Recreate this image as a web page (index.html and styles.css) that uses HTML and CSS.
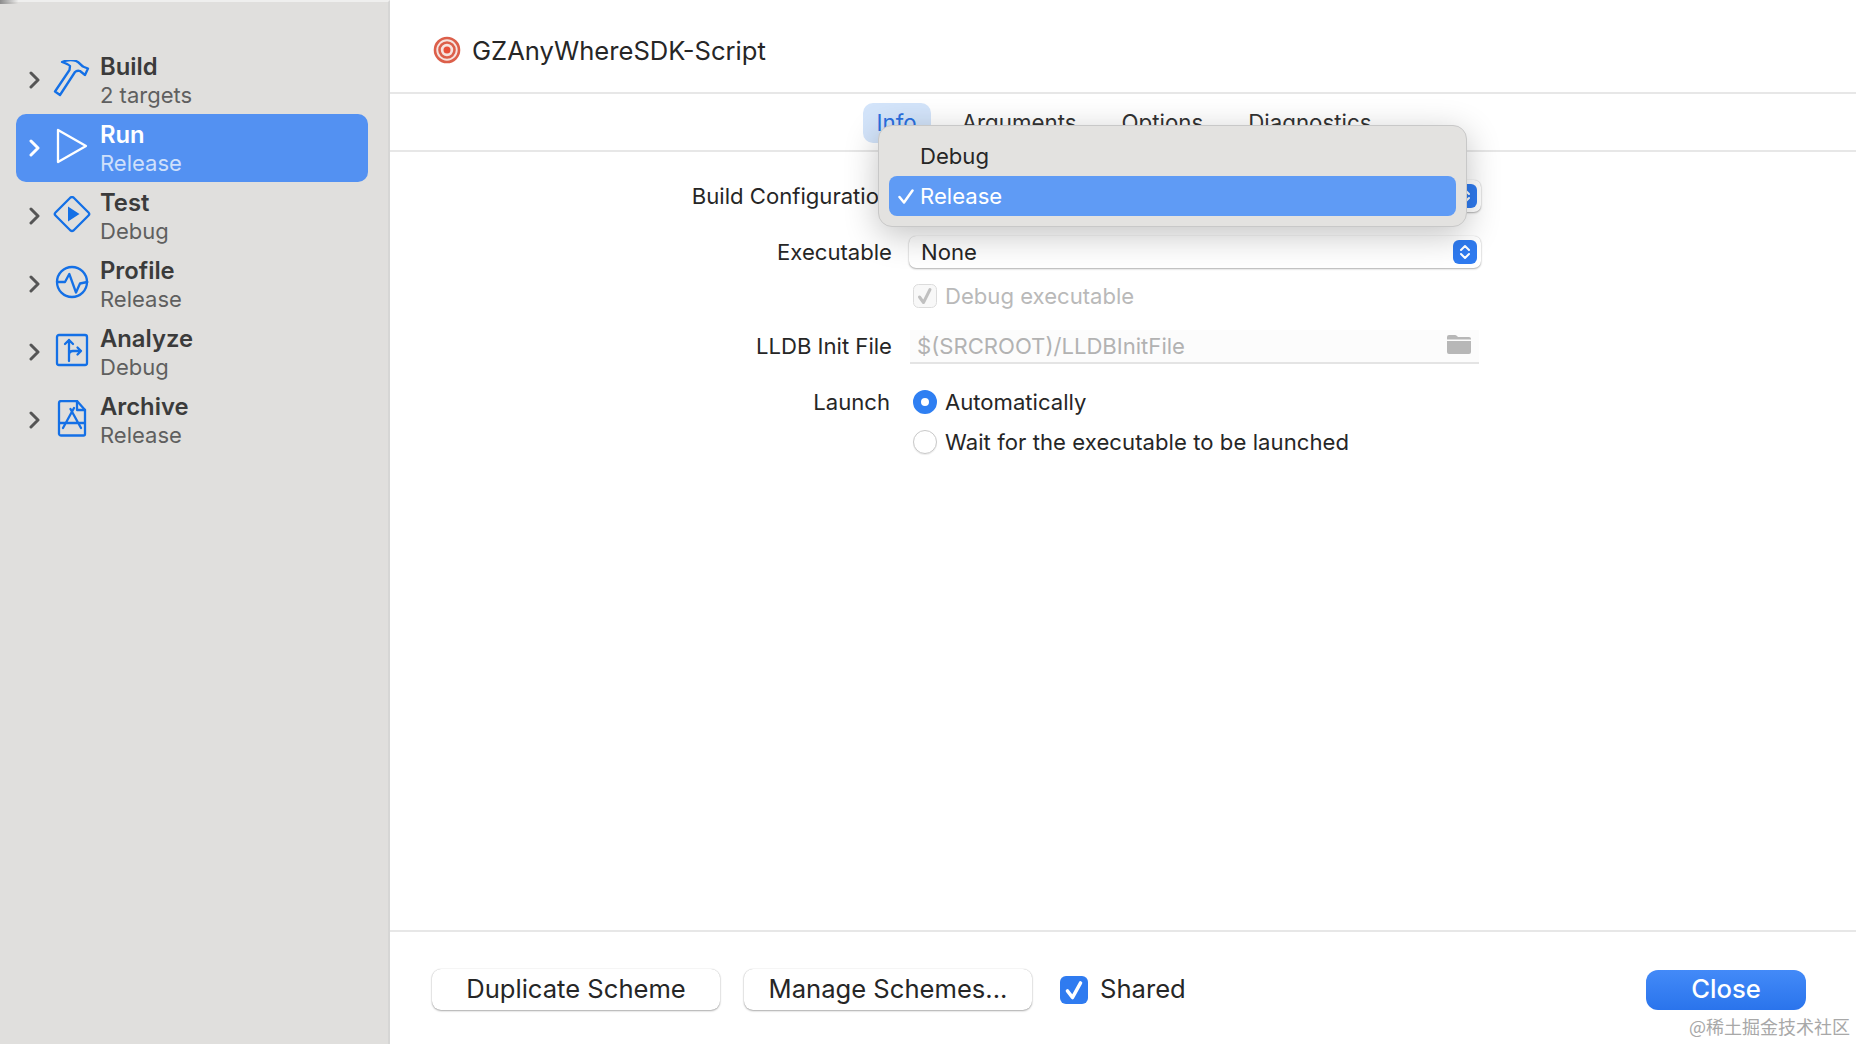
FILE: index.html
```html
<!DOCTYPE html>
<html lang="en">
<head>
<meta charset="utf-8">
<title>GZAnyWhereSDK-Script</title>
<link rel="stylesheet" href="styles.css">
</head>
<body>
<div class="window">
  <aside class="sidebar">
    <div class="action">
      <svg class="chev" viewBox="0 0 12 18"><path d="M2 2l7 7-7 7"/></svg>
      <svg class="icon" viewBox="0 0 40 40"><path d="M10 2C15 0 20-.3 24 1c4 1.500 5 5 8 6l4 1.500L33 15l-5-4c-2-.5-4 0-5 1L8 35l-5-3.500L17.500 10l.5-4c-2-2-5-3-8-4z"/></svg>
      <div class="labels"><span class="name">Build</span><span class="sub">2 targets</span></div>
    </div>
    <div class="action selected">
      <svg class="chev" viewBox="0 0 12 18"><path d="M2 2l7 7-7 7"/></svg>
      <svg class="icon" viewBox="0 0 40 40"><path d="M6 2l28 16L6 34z"/></svg>
      <div class="labels"><span class="name">Run</span><span class="sub">Release</span></div>
    </div>
    <div class="action">
      <svg class="chev" viewBox="0 0 12 18"><path d="M2 2l7 7-7 7"/></svg>
      <svg class="icon" viewBox="0 0 40 40"><path d="M18.500 1.500q1.500-1 3 0L36.500 16.500q1.500 1.500 0 3L21.500 34.500q-1.500 1-3 0L3.500 19.500q-1.500-1.500 0-3z"/><path class="fill" d="M16 10.500l11.500 7.500-11.500 7.500z"/></svg>
      <div class="labels"><span class="name">Test</span><span class="sub">Debug</span></div>
    </div>
    <div class="action">
      <svg class="chev" viewBox="0 0 12 18"><path d="M2 2l7 7-7 7"/></svg>
      <svg class="icon" viewBox="0 0 40 40"><circle cx="20" cy="18" r="15"/><path d="M5 18h8l4.300-8L24 28.500l4-9 7.300-1.500"/></svg>
      <div class="labels"><span class="name">Profile</span><span class="sub">Release</span></div>
    </div>
    <div class="action">
      <svg class="chev" viewBox="0 0 12 18"><path d="M2 2l7 7-7 7"/></svg>
      <svg class="icon" viewBox="0 0 40 40"><rect x="5" y="3" width="30" height="30" rx="2"/><path d="M17 29V8m-4 4l4-4 4 4M17 23c0-3 2-4 4-4h8m-3.500-3.500L29 19l-3.500 3.500"/></svg>
      <div class="labels"><span class="name">Analyze</span><span class="sub">Debug</span></div>
    </div>
    <div class="action">
      <svg class="chev" viewBox="0 0 12 18"><path d="M2 2l7 7-7 7"/></svg>
      <svg class="icon" viewBox="0 0 40 40"><path d="M9 1h16l8 9v24a1.500 1.500 0 0 1-1.500 1.500H9A2 2 0 0 1 7 34V3a2 2 0 0 1 2-2z"/><path d="M25 1v9h8M22 8L11 28M18.500 9L29 28M8 23h24" /></svg>
      <div class="labels"><span class="name">Archive</span><span class="sub">Release</span></div>
    </div>
  </aside>

  <main class="main">
    <header class="header">
      <svg class="target" viewBox="0 0 28 28"><circle class="t-bg" cx="14" cy="14" r="12"/><circle class="t-ring" cx="14" cy="14" r="12"/><circle class="t-ring" cx="14" cy="14" r="7.500"/><circle class="t-dot" cx="14" cy="14" r="3.500"/></svg>
      <span class="title">GZAnyWhereSDK-Script</span>
    </header>
    <nav class="tabs">
      <span class="tab active">Info</span>
      <span class="tab">Arguments</span>
      <span class="tab">Options</span>
      <span class="tab">Diagnostics</span>
    </nav>
    <section class="form">
      <div class="row first">
        <label class="label">Build Configuration</label>
        <div class="select"><span>Release</span>
          <svg class="stepper" viewBox="0 0 24 24"><rect width="24" height="24" rx="6"/><path d="M8 10l4-4 4 4M8 14l4 4 4-4"/></svg>
        </div>
      </div>
      <div class="row exec">
        <label class="label">Executable</label>
        <div class="select"><span>None</span>
          <svg class="stepper" viewBox="0 0 24 24"><rect width="24" height="24" rx="6"/><path d="M8 10l4-4 4 4M8 14l4 4 4-4"/></svg>
        </div>
      </div>
      <div class="row debug">
        <span class="label"></span>
        <div class="option muted">
          <svg class="box" viewBox="0 0 24 24"><rect x=".5" y=".5" width="23" height="23" rx="5"/><path d="M6.500 13l4 5.500 6.500-13"/></svg>
          <span>Debug executable</span>
        </div>
      </div>
      <div class="row lldb">
        <label class="label">LLDB Init File</label>
        <div class="field"><span>$(SRCROOT)/LLDBInitFile</span>
          <svg class="folder" viewBox="0 0 24 20"><path d="M0 3a2 2 0 0 1 2-2h6c1.500 0 2 1 3 2h11a2 2 0 0 1 2 2v.5H0zM0 7h24v11a2 2 0 0 1-2 2H2a2 2 0 0 1-2-2z"/></svg>
        </div>
      </div>
      <div class="row launch">
        <label class="label">Launch</label>
        <div class="option"><span class="radio on"></span><span>Automatically</span></div>
      </div>
      <div class="row wait">
        <span class="label"></span>
        <div class="option"><span class="radio"></span><span>Wait for the executable to be launched</span></div>
      </div>
    </section>
    <footer class="footer">
      <button class="btn">Duplicate Scheme</button>
      <button class="btn">Manage Schemes...</button>
      <div class="shared">
        <svg class="shared-box" viewBox="0 0 28 28"><rect width="28" height="28" rx="6"/><path d="M7.500 15l5 6.500L20.500 7"/></svg>
        <span>Shared</span>
      </div>
      <button class="btn primary">Close</button>
    </footer>
    <div class="popup">
      <div class="item">Debug</div>
      <div class="item chosen"><svg class="tick" viewBox="0 0 16 15"><path d="M1.500 8l4.500 5.500L14.500 1.500"/></svg>Release</div>
    </div>
    <div class="watermark">@稀土掘金技术社区</div>
  </main>
</div>
</body>
</html>
```
FILE: styles.css
```css
* { box-sizing: border-box; }
html, body { margin: 0; height: 100%; }
body { font-family: Inter, "Noto Sans", sans-serif; background: #fff; color: #262626; overflow: hidden; }
.window { display: flex; height: 1044px; }

.sidebar { position: relative; width: 390px; flex: none; background: #e0dfdd; border-right: 2px solid #d6d6d5; border-top: 2px solid #efefee; padding: 44px 20px 0 16px; }
.sidebar::before { content: ""; position: absolute; left: 0; top: -2px; width: 18px; height: 4px; background: linear-gradient(100deg, #8b8b8b, rgba(139,139,139,0)); }
.action { display: flex; align-items: center; height: 68px; border-radius: 10px; padding-left: 13px; }
.chev { width: 12px; height: 18px; flex: none; margin-right: 11px; fill: none; stroke: #555; stroke-width: 3; stroke-linecap: round; stroke-linejoin: round; }
.icon { width: 40px; height: 40px; flex: none; margin-right: 8px; fill: none; stroke: #1470e6; stroke-width: 2.300; stroke-linejoin: round; stroke-linecap: round; }
.icon .fill { fill: #1470e6; stroke: none; }
.labels { display: flex; flex-direction: column; padding-top: 2px; }
.name { font-size: 23.800px; line-height: 29px; font-weight: 600; color: #3b3b3b; }
.sub { font-size: 22px; line-height: 29px; color: #5f5f5f; }
.selected { background: #5391f2; }
.selected .chev, .selected .icon { stroke: #fff; }
.selected .name { color: #fff; }
.selected .sub { color: #cfe0fb; }

.main { position: relative; flex: 1; display: flex; flex-direction: column; min-width: 0; }
.header { height: 94px; flex: none; display: flex; align-items: center; gap: 11px; padding: 12px 0 4px 43px; border-bottom: 2px solid #e7e7e7; }
.target { width: 28px; height: 28px; flex: none; }
.t-bg { fill: #f6e3df; }
.t-ring { fill: none; stroke: #dc5f4a; stroke-width: 2.600; }
.t-dot { fill: #e8503a; }
.title { font-size: 25.600px; line-height: 32px; color: #262626; padding-top: 2px; }

.tabs { height: 58px; flex: none; display: flex; justify-content: center; gap: 17px; padding: 9px 0 0 2px; border-bottom: 2px solid #e7e7e7; }
.tab { height: 40px; padding: 0 14px; font-size: 22.300px; line-height: 40px; border-radius: 10px; color: #333; }
.tab.active { background: #d3e4fa; color: #2a6fe0; }

.form { flex: 1; padding-top: 28px; }
.row { display: grid; grid-template-columns: 502px 1fr; column-gap: 16px; align-items: center; width: 1091px; }
.label { text-align: right; font-size: 22.100px; line-height: 32px; color: #262626; }
.exec { margin-top: 24px; }
.debug { margin-top: 16px; }
.lldb { margin-top: 22px; }
.lldb .label { margin-bottom: 2px; }
.launch { margin-top: 22px; }
.launch .label { padding-right: 2px; }
.wait { margin-top: 12px; letter-spacing: .06px; }

.select { position: relative; height: 32px; margin-left: 1px; border-radius: 7px; background: #fff; box-shadow: 0 1px 2px rgba(0,0,0,.3), 0 0 1px rgba(0,0,0,.2); display: flex; align-items: center; justify-content: space-between; padding: 0 4px 0 12px; font-size: 22.100px; }
.stepper { width: 24px; height: 24px; flex: none; }
.stepper rect { fill: #2f7bf0; }
.stepper path { fill: none; stroke: #fff; stroke-width: 2; stroke-linecap: round; stroke-linejoin: round; }

.option { display: flex; align-items: center; gap: 8px; height: 24px; margin-left: 5px; font-size: 22.100px; }
.muted { color: #b9b9b9; }
.box { width: 24px; height: 24px; flex: none; }
.box rect { fill: #f8f8f8; stroke: #dcdcdc; }
.box path { fill: none; stroke: #c0c0c0; stroke-width: 3; stroke-linecap: round; stroke-linejoin: round; }
.radio { width: 24px; height: 24px; flex: none; border-radius: 50%; background: #fff; border: 1px solid #c9c9c9; box-shadow: 0 1px 1px rgba(0,0,0,.08); }
.radio.on { background: #fff; border: 8px solid #2f7ff2; box-shadow: none; }

.field { height: 34px; margin: 0 2px; background: #fcfcfc; border-bottom: 2px solid #e4e4e4; display: flex; align-items: center; justify-content: space-between; padding: 0 8px 0 7px; font-size: 22.100px; color: #b2b2b2; }
.folder { width: 24px; height: 20px; fill: #b7b7b7; margin-top: -4px; }

.footer { position: relative; height: 114px; flex: none; display: flex; align-items: center; gap: 24px; padding: 3px 50px 0 42px; border-top: 2px solid #e7e7e7; }
.btn { width: 288px; height: 41px; padding: 0 0 2px; border: none; border-radius: 9px; background: #fff; font-family: inherit; font-size: 25.600px; color: #262626; box-shadow: 0 1px 2px rgba(0,0,0,.32), 0 0 1px rgba(0,0,0,.25); }
.primary { width: 160px; height: 40px; margin-left: auto; border-radius: 12px; font-weight: 500; color: #fff; background: linear-gradient(#438af8, #2a74ec); box-shadow: none; }
.shared { display: flex; align-items: center; gap: 12px; margin-left: 4px; font-size: 25.600px; }
.shared > span { margin-top: -2px; }
.shared-box { width: 28px; height: 28px; flex: none; }
.shared-box rect { fill: #2f7bf0; }
.shared-box path { fill: none; stroke: #fff; stroke-width: 3.600; stroke-linecap: round; stroke-linejoin: round; }

.popup { position: absolute; left: 488px; top: 125px; width: 589px; height: 102px; padding: 10px 10px; border-radius: 14px; background: #e3e2e0; border: 1px solid #c8c8c8; box-shadow: 0 8px 34px rgba(0,0,0,.24); }
.item { position: relative; height: 40px; line-height: 40px; padding-left: 31px; font-size: 22.100px; color: #262626; border-radius: 8px; }
.chosen { background: #5f9bf5; color: #fff; }
.tick { position: absolute; left: 9px; top: 13px; width: 16px; height: 15px; fill: none; stroke: #fff; stroke-width: 2.500; stroke-linecap: round; stroke-linejoin: round; }

.watermark { position: absolute; right: 6px; bottom: 7px; font-family: "Noto Sans CJK SC", sans-serif; font-size: 18px; line-height: 22px; color: #a8a8a8; }
```
